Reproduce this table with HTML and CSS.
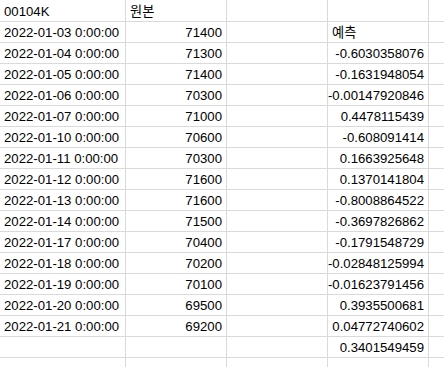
FILE: index.html
```html
<!DOCTYPE html>
<html lang="ko">
<head>
<meta charset="utf-8">
<link rel="stylesheet" href="styles.css">
</head>
<body>
<div class="sheet">
  <div class="c">00104K</div><div class="c">원본</div><div class="c"></div><div class="c"></div><div class="c"></div>
  <div class="c">2022-01-03 0:00:00</div><div class="c r">71400</div><div class="c"></div><div class="c">예측</div><div class="c"></div>
  <div class="c">2022-01-04 0:00:00</div><div class="c r">71300</div><div class="c"></div><div class="c r">-0.6030358076</div><div class="c"></div>
  <div class="c">2022-01-05 0:00:00</div><div class="c r">71400</div><div class="c"></div><div class="c r">-0.1631948054</div><div class="c"></div>
  <div class="c">2022-01-06 0:00:00</div><div class="c r">70300</div><div class="c"></div><div class="c r">-0.00147920846</div><div class="c"></div>
  <div class="c">2022-01-07 0:00:00</div><div class="c r">71000</div><div class="c"></div><div class="c r">0.4478115439</div><div class="c"></div>
  <div class="c">2022-01-10 0:00:00</div><div class="c r">70600</div><div class="c"></div><div class="c r">-0.608091414</div><div class="c"></div>
  <div class="c">2022-01-11 0:00:00</div><div class="c r">70300</div><div class="c"></div><div class="c r">0.1663925648</div><div class="c"></div>
  <div class="c">2022-01-12 0:00:00</div><div class="c r">71600</div><div class="c"></div><div class="c r">0.1370141804</div><div class="c"></div>
  <div class="c">2022-01-13 0:00:00</div><div class="c r">71600</div><div class="c"></div><div class="c r">-0.8008864522</div><div class="c"></div>
  <div class="c">2022-01-14 0:00:00</div><div class="c r">71500</div><div class="c"></div><div class="c r">-0.3697826862</div><div class="c"></div>
  <div class="c">2022-01-17 0:00:00</div><div class="c r">70400</div><div class="c"></div><div class="c r">-0.1791548729</div><div class="c"></div>
  <div class="c">2022-01-18 0:00:00</div><div class="c r">70200</div><div class="c"></div><div class="c r">-0.02848125994</div><div class="c"></div>
  <div class="c">2022-01-19 0:00:00</div><div class="c r">70100</div><div class="c"></div><div class="c r">-0.01623791456</div><div class="c"></div>
  <div class="c">2022-01-20 0:00:00</div><div class="c r">69500</div><div class="c"></div><div class="c r">0.3935500681</div><div class="c"></div>
  <div class="c">2022-01-21 0:00:00</div><div class="c r">69200</div><div class="c"></div><div class="c r">0.04772740602</div><div class="c"></div>
  <div class="c"></div><div class="c"></div><div class="c"></div><div class="c r">0.3401549459</div><div class="c"></div>
  <div class="c"></div><div class="c"></div><div class="c"></div><div class="c"></div><div class="c"></div>
</div>
</body>
</html>
```

FILE: styles.css
```css
html, body {
  margin: 0;
  padding: 0;
  background: #ffffff;
  overflow: hidden;
}
.sheet {
  display: grid;
  grid-template-columns: 125px 100px 100px 100px 1fr;
  grid-template-rows: 21px;
  grid-auto-rows: 20px;
  gap: 1px;
  background: #dadada;
  width: 444px;
  font-family: "Liberation Sans", "Noto Sans CJK KR", sans-serif;
  font-size: 13.2px;
  line-height: 14px;
  color: #000000;
}
.c {
  background: #ffffff;
  display: flex;
  align-items: flex-end;
  padding: 0 4px 2.5px 4px;
  white-space: nowrap;
  overflow: visible;
}
.r {
  justify-content: flex-end;
}
```
